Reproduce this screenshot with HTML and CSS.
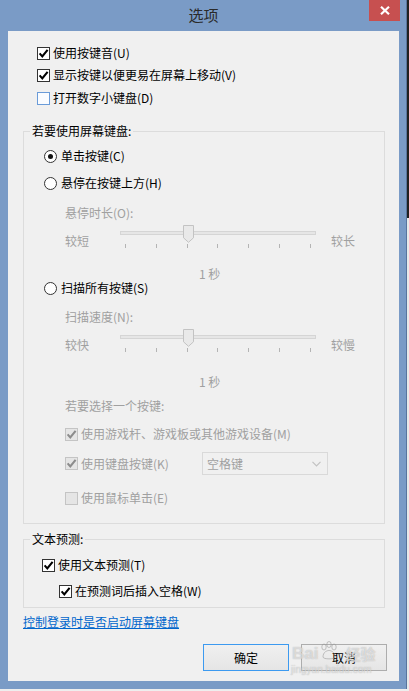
FILE: index.html
```html
<!DOCTYPE html>
<html lang="zh-CN">
<head>
<meta charset="utf-8">
<title>选项</title>
<link rel="stylesheet" href="styles.css">
</head>
<body>
<div class="screen">
  <div class="window">
    <div class="titlebar">
      <span class="title">选项</span>
      <span class="close"><svg width="10" height="9" viewBox="0 0 10 9"><path d="M1 0.8 L9 8.2 M9 0.8 L1 8.2" stroke="#fff" stroke-width="2.2" fill="none"/></svg></span>
    </div>
    <div class="client">
      <div class="top-checks">
        <div class="row"><span class="cb on"><svg viewBox="0 0 11 11"><path d="M1.6 5.4 L4.3 8.4 L9.6 1.8" stroke="#000" stroke-width="2.1" fill="none"/></svg></span>使用按键音(U)</div>
        <div class="row"><span class="cb on"><svg viewBox="0 0 11 11"><path d="M1.6 5.4 L4.3 8.4 L9.6 1.8" stroke="#000" stroke-width="2.1" fill="none"/></svg></span>显示按键以便更易在屏幕上移动(V)</div>
        <div class="row r3"><span class="cb hover"></span>打开数字小键盘(D)</div>
      </div>

      <fieldset class="group g1">
        <legend>若要使用屏幕键盘:</legend>
        <div class="inner">
          <div class="row rr1"><span class="rb on"></span>单击按键(C)</div>
          <div class="row rr2"><span class="rb"></span>悬停在按键上方(H)</div>
          <div class="sub">
            <div class="dim cap cap1">悬停时长(O):</div>
            <div class="slider">
              <span class="dim lbl">较短</span>
              <div class="track-area">
                <div class="track"></div>
                <svg class="thumb" width="11" height="18" viewBox="0 0 11 18"><path d="M0.5 0.5 H10.5 V12.8 L5.5 17.3 L0.5 12.8 Z" fill="#e9e9e9" stroke="#c3c3c3"/></svg>
                <div class="ticks"><i></i><i></i><i></i><i></i><i></i><i></i><i></i></div>
              </div>
              <span class="dim lbl lbl-r">较长</span>
            </div>
            <div class="dim value v1">1 秒</div>
          </div>
          <div class="row rr3"><span class="rb"></span>扫描所有按键(S)</div>
          <div class="sub">
            <div class="dim cap cap2">扫描速度(N):</div>
            <div class="slider">
              <span class="dim lbl">较快</span>
              <div class="track-area">
                <div class="track"></div>
                <svg class="thumb" width="11" height="18" viewBox="0 0 11 18"><path d="M0.5 0.5 H10.5 V12.8 L5.5 17.3 L0.5 12.8 Z" fill="#e9e9e9" stroke="#c3c3c3"/></svg>
                <div class="ticks"><i></i><i></i><i></i><i></i><i></i><i></i><i></i></div>
              </div>
              <span class="dim lbl lbl-r">较慢</span>
            </div>
            <div class="dim value v2">1 秒</div>
            <div class="dim cap cap3">若要选择一个按键:</div>
            <div class="row dim rm"><span class="cb dis"><svg viewBox="0 0 11 11"><path d="M1.6 5.4 L4.3 8.4 L9.6 1.8" stroke="#8c8c8c" stroke-width="2.1" fill="none"/></svg></span>使用游戏杆、游戏板或其他游戏设备(M)</div>
            <div class="row dim rk"><span class="cb dis"><svg viewBox="0 0 11 11"><path d="M1.6 5.4 L4.3 8.4 L9.6 1.8" stroke="#8c8c8c" stroke-width="2.1" fill="none"/></svg></span><span class="ktext">使用键盘按键(K)</span>
              <span class="select">空格键<svg width="9" height="6" viewBox="0 0 9 6"><path d="M0.5 0.8 L4.5 4.8 L8.5 0.8" stroke="#c2c2c2" stroke-width="1.2" fill="none"/></svg></span>
            </div>
            <div class="row dim re"><span class="cb dis"></span>使用鼠标单击(E)</div>
          </div>
        </div>
      </fieldset>

      <fieldset class="group g2">
        <legend>文本预测:</legend>
        <div class="inner">
          <div class="row rt"><span class="cb on"><svg viewBox="0 0 11 11"><path d="M1.6 5.4 L4.3 8.4 L9.6 1.8" stroke="#000" stroke-width="2.1" fill="none"/></svg></span>使用文本预测(T)</div>
          <div class="row rw"><span class="cb on"><svg viewBox="0 0 11 11"><path d="M1.6 5.4 L4.3 8.4 L9.6 1.8" stroke="#000" stroke-width="2.1" fill="none"/></svg></span>在预测词后插入空格(W)</div>
        </div>
      </fieldset>

      <a class="link" href="#">控制登录时是否启动屏幕键盘</a>

      <div class="buttons">
        <span class="btn default">确定</span>
        <span class="btn">取消</span>
        <div class="watermark">
          <div class="wm-top"><span class="wm-bai">Bai</span><svg class="wm-paw" width="20" height="20" viewBox="0 0 20 20"><g fill="none" stroke="rgba(150,150,150,0.55)" stroke-width="1"><ellipse cx="5" cy="6" rx="2.2" ry="3"/><ellipse cx="10" cy="3.5" rx="2.2" ry="3"/><ellipse cx="15" cy="6" rx="2.2" ry="3"/><path d="M4 16 C4 11 8 9.5 10 9.5 C12 9.5 16 11 16 16 C16 18.5 4 18.5 4 16 Z"/></g></svg><span class="wm-jy">经验</span></div>
          <div class="wm-url">jingyan.baidu.com</div>
        </div>
      </div>
    </div>
  </div>
  <div class="backdrop"><div class="dark"></div><div class="light"></div></div>
</div>
</body>
</html>
```

FILE: styles.css
```css
html, body {
  margin: 0;
  padding: 0;
}
body {
  width: 409px;
  height: 691px;
  overflow: hidden;
  background: #eeeeee;
  font-family: "Noto Sans CJK SC", "Microsoft YaHei", sans-serif;
  font-size: 12px;
  color: #000;
}
.screen {
  display: flex;
  height: 689px;
}
.window {
  flex: none;
  width: 407px;
  height: 689px;
  box-sizing: border-box;
  background: #7a9bc6;
  padding: 0 7px 8px 8px;
  border-right: 1px solid #58759e;
  display: flex;
  flex-direction: column;
}
.titlebar {
  height: 31px;
  flex: none;
  display: grid;
  grid-template-columns: 1fr auto 1fr;
  align-items: start;
}
.title {
  grid-column: 2;
  line-height: 30px;
  font-size: 15px;
  color: #2a2a2a;
}
.close {
  grid-column: 3;
  justify-self: end;
  margin-right: -1px;
  width: 31px;
  height: 21px;
  background: #c75050;
  display: flex;
  align-items: center;
  justify-content: center;
}
.client {
  flex: 1;
  background: #f0f0f0;
  padding-top: 14px;
  display: flex;
  flex-direction: column;
}
.row {
  display: flex;
  align-items: center;
  height: 16px;
  line-height: 16px;
  white-space: nowrap;
}
.top-checks {
  padding-left: 29px;
  display: flex;
  flex-direction: column;
  gap: 6px;
}
.top-checks .r3 { margin-top: 1px; }

.cb {
  flex: none;
  width: 13px;
  height: 13px;
  box-sizing: border-box;
  border: 1px solid #333;
  background: #fff;
  margin-right: 3px;
  display: flex;
  align-items: center;
  justify-content: center;
}
.cb svg { width: 11px; height: 11px; }
.cb.hover {
  border-color: #6a9bd8;
  background: #fafcff;
}
.cb.dis {
  border-color: #c4c4c4;
  background: #e5e5e5;
}
.rb {
  flex: none;
  width: 13px;
  height: 13px;
  box-sizing: border-box;
  border: 1px solid #333;
  border-radius: 50%;
  background: #fff;
  margin-right: 4px;
  display: flex;
  align-items: center;
  justify-content: center;
}
.rb.on::after {
  content: "";
  width: 5px;
  height: 5px;
  border-radius: 50%;
  background: #111;
}

.group {
  margin: 0 14px 0 15px;
  padding: 0;
  border: 1px solid #dcdcdc;
  min-width: 0;
}
.group legend {
  margin-left: 6px;
  padding: 0 2px;
  line-height: 16px;
}
.g1 { margin-top: 17px; }
.g1 .inner {
  padding: 0 0 17px 20px;
}
.rr1 { margin-top: 9px; }
.rr2 { margin-top: 11px; }
.rr3 { margin-top: 0; }
.dim { color: #a0a0a0; }
.sub {
  margin-left: 21px;
}
.cap {
  line-height: 16px;
  white-space: nowrap;
}
.cap1 { margin-top: 14px; }
.cap2 { margin-top: 13px; }
.cap3 { margin-top: 10px; }
.slider {
  display: grid;
  grid-template-columns: 55px 196px auto;
  height: 27px;
}
.lbl {
  padding-top: 12px;
  line-height: 16px;
}
.lbl-r { padding-left: 15px; }
.track-area {
  position: relative;
}
.track {
  margin-top: 10px;
  height: 4px;
  box-sizing: border-box;
  border: 1px solid #d5d5d5;
  background: #e6e6e6;
}
.thumb {
  position: absolute;
  top: 4px;
  left: 63px;
}
.ticks {
  margin-top: 9px;
  height: 4px;
  padding: 0 5px;
  display: flex;
  justify-content: space-between;
}
.ticks i {
  width: 1px;
  height: 4px;
  background: #b4b4b4;
}
.value {
  line-height: 12px;
  padding-left: 134px;
}
.v1 { margin-top: 20px; }
.v2 { margin-top: 24px; }
.rm { margin-top: 12px; }
.rk { margin-top: 10px; height: 23px; }
.re { margin-top: 15px; }
.ktext { width: 121px; }
.select {
  width: 126px;
  height: 23px;
  box-sizing: border-box;
  border: 1px solid #d9d9d9;
  background: #f0f0f0;
  display: flex;
  align-items: center;
  justify-content: space-between;
  padding: 0 6px 0 4px;
  color: #a0a0a0;
}

.g2 { margin-top: 7px; }
.g2 .inner {
  padding: 0 0 8px 18px;
}
.rt { margin-top: 10px; }
.rw { margin-top: 10px; margin-left: 17px; }

.link {
  margin: 6px 0 0 15px;
  line-height: 16px;
  color: #0066cc;
  text-decoration: underline;
  align-self: flex-start;
}
.buttons {
  position: relative;
  margin-top: 14px;
  padding-right: 12px;
  display: flex;
  justify-content: flex-end;
  gap: 12px;
}
.btn {
  width: 86px;
  height: 27px;
  box-sizing: border-box;
  border: 1px solid #adadad;
  background: linear-gradient(#f0f0f0, #e5e5e5);
  display: flex;
  align-items: center;
  justify-content: center;
  color: #000;
}
.btn.default {
  border-color: #3c9af0;
}
.watermark {
  position: absolute;
  left: 282px;
  top: -6px;
  width: 100px;
  pointer-events: none;
  font-family: "Liberation Sans", "Noto Sans CJK SC", sans-serif;
  color: rgba(255, 255, 255, 0.55);
  text-shadow: 0 0 1px rgba(140, 140, 140, 0.7);
}
.wm-top {
  display: flex;
  align-items: flex-end;
  height: 26px;
}
.wm-bai {
  font-size: 17px;
  font-weight: bold;
  line-height: 20px;
  margin-left: 2px;
}
.wm-paw {
  margin: 0 6px 3px 1px;
}
.wm-jy {
  font-size: 15px;
  font-weight: bold;
  line-height: 20px;
  font-family: "Noto Sans CJK SC", sans-serif;
}
.wm-url {
  font-size: 10px;
  line-height: 12px;
  margin-left: 1px;
  color: rgba(255, 255, 255, 0.5);
}

.backdrop {
  flex: 1;
  display: flex;
  flex-direction: column;
}
.backdrop .dark {
  height: 218px;
  background: #202020;
}
.backdrop .light {
  flex: 1;
  background: #e9e9e9;
}
```
